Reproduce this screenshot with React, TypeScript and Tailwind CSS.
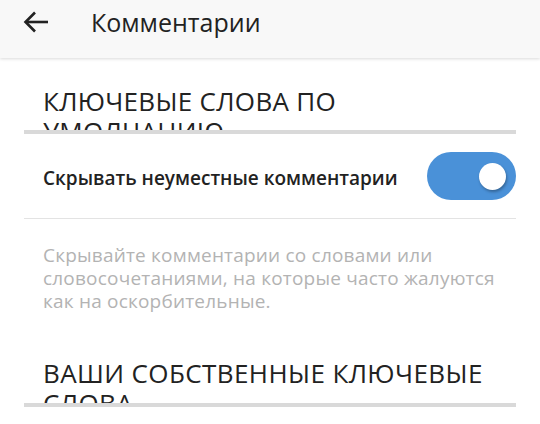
import React from "react";

export default function App() {
  return (
    <div
      className="w-[540px] h-[424px] bg-white overflow-hidden"
      style={{ fontFamily: '"Open Sans", "Noto Sans", sans-serif' }}
    >
      <header className="h-[58px] pb-[14px] bg-[#f8f8f8] flex items-center shadow-[0_1px_3px_rgba(0,0,0,0.15)] relative z-10">
        <svg
          className="ml-[23px]"
          width="25"
          height="22"
          viewBox="0 0 25 22"
          fill="none"
          stroke="#222"
          strokeWidth="2.6"
          strokeLinecap="butt"
        >
          <path d="M25 11H3" />
          <path d="M12 1.5L2.5 11L12 20.5" />
        </svg>
        <h1 className="ml-[43px] text-[25px] text-[#222] leading-none">Комментарии</h1>
      </header>

      <div className="mx-[24px]">
        <div className="h-[72px] overflow-hidden pt-[28px] px-[19px] text-[26px] tracking-[0.3px] leading-[30px] text-[#222]">
          КЛЮЧЕВЫЕ СЛОВА ПО УМОЛЧАНИЮ
        </div>
        <div className="h-[4px] bg-[#d9d9d9]" />

        <div className="h-[85px] border-b border-[#e3e3e3] flex items-center justify-between pl-[19px]">
          <span className="text-[19px] font-semibold text-[#222] mt-[4px]">
            Скрывать неуместные комментарии
          </span>
          <div className="w-[89px] h-[48px] rounded-full bg-[#4a91d8] flex items-center justify-end pr-[10px]">
            <div className="w-[27px] h-[27px] rounded-full bg-white shadow-[1px_2px_3px_rgba(0,0,0,0.3)]" />
          </div>
        </div>

        <p className="pt-[25px] px-[19px] text-[19px] tracking-[0.2px] leading-[23px] text-[#b3b3b3]">
          Скрывайте комментарии со словами или словосочетаниями, на которые часто жалуются как на
          оскорбительные.
        </p>

        <div className="mt-[45px] h-[45px] overflow-hidden px-[19px] text-[26px] tracking-[0.4px] leading-[30px] text-[#222]">
          ВАШИ СОБСТВЕННЫЕ КЛЮЧЕВЫЕ СЛОВА
        </div>
        <div className="h-[4px] bg-[#d9d9d9]" />
      </div>
    </div>
  );
}
